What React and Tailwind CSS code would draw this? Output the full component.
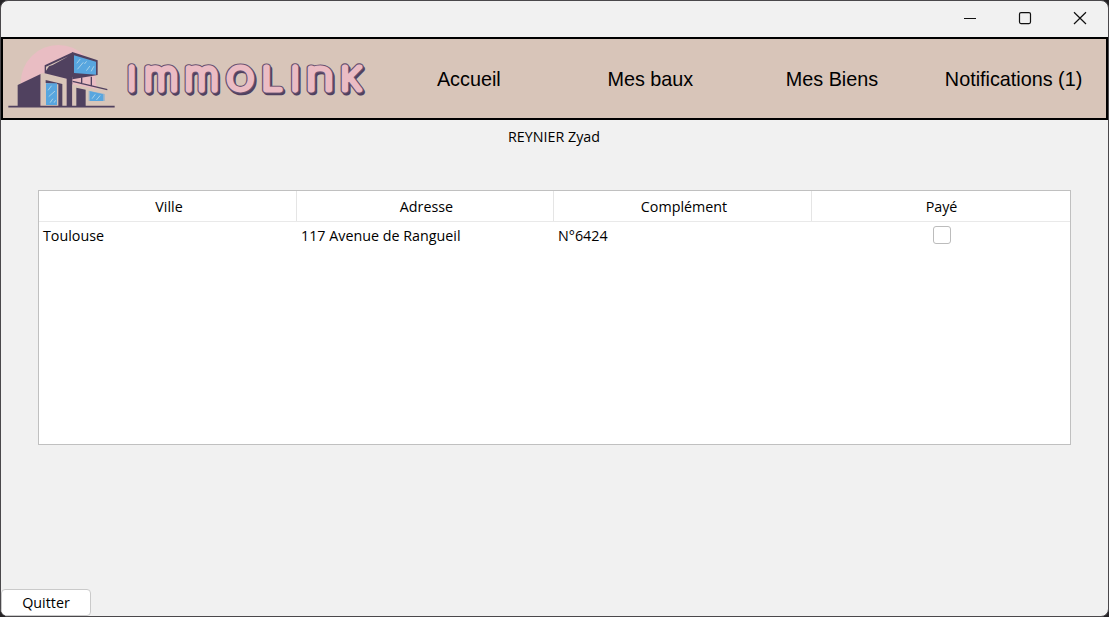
import React from "react";

const letters = [
  { c: "I", x: 127.7, sx: 1, size: 31 },
  { c: "m", x: 144.1, sx: 0.98, size: 40.5 },
  { c: "m", x: 184.6, sx: 0.98, size: 40.5 },
  { c: "O", x: 226.8, sx: 1.17, size: 31 },
  { c: "L", x: 262, sx: 1.15, size: 31 },
  { c: "I", x: 291.3, sx: 1, size: 31 },
  { c: "n", x: 305.9, sx: 1.18, size: 40.5 },
  { c: "K", x: 340.8, sx: 1.08, size: 31 },
];

function Wordmark() {
  return (
    <svg viewBox="120 39 255 79" className="h-[79px] w-[255px] shrink-0" role="img" aria-label="Immolink">
      <defs>
        <g id="wordmark" fontFamily="Inter, sans-serif" fontWeight="100">
          {letters.map((l, i) => (
            <text
              key={i}
              transform={`translate(${l.x} 90) scale(${l.sx} 1)`}
              fontSize={l.size}
              vectorEffect="non-scaling-stroke"
            >
              {l.c}
            </text>
          ))}
        </g>
      </defs>
      <g strokeLinejoin="round" strokeLinecap="round">
        <use href="#wordmark" x="1.5" y="1.5" fill="#50415f" stroke="#50415f" strokeWidth="7.2" />
        <use href="#wordmark" fill="#50415f" stroke="#665270" strokeWidth="7.6" />
        <use href="#wordmark" fill="#ebbcc4" stroke="#ebbcc4" strokeWidth="5.3" />
      </g>
    </svg>
  );
}

function House() {
  return (
    <svg viewBox="9 9 351 237" className="h-[79px] w-[117px] shrink-0" aria-hidden="true">
      <path d="M62 140A113 114 0 0 1 175 27A113 114 0 0 1 288 140L290 150V210H62Z" fill="#e9bdc3" />
      <path d="M53 147L122 114V210H53Z" fill="#50415f" />
      <path d="M122 112L136 112L200 128V210H122Z" fill="#d8c5b9" />
      <path d="M137 132L187 144V210H175V145L137 141Z" fill="#50415f" />
      <path d="M138 142H171V207H138Z" fill="#58a6df" />
      <path d="M134 88L219 48V122L200 128L134 112Z" fill="#50415f" />
      <path d="M138 104V92L206 61L158 87L147 91Z" fill="#d8c5b9" />
      <path d="M217 48L293 73V117L217 130Z" fill="#50415f" />
      <path d="M222 58L288 77V116L222 111Z" fill="#58a6df" />
      <path d="M200 120H217V210H200Z" fill="#50415f" />
      <path d="M217 145L310 163V210H217Z" fill="#d8c5b9" />
      <path d="M218 136L322 161M245 124V142M274 122V148" stroke="#50415f" strokeWidth="4" fill="none" />
      <path d="M229 155L257 161V210H229Z" fill="#50415f" />
      <path d="M266 164L314 174V195H266Z" fill="#8fb3cf" />
      <path d="M270 166L309 175V195H270Z" fill="#58a6df" />
      <path
        d="M145 162L154 150M147 181L164 166M151 199L158 189M163 199L166 194M231 81L240 70M233 99L249 80M254 83L259 77M260 103L269 91M274 105L281 92M277 187L285 176M290 191L300 179"
        stroke="#a9d2e9"
        strokeWidth="3"
        strokeLinecap="round"
      />
      <path d="M25 212H344" stroke="#50415f" strokeWidth="5" />
    </svg>
  );
}

function TitleBar() {
  return (
    <div className="flex h-9 shrink-0 justify-end">
      <svg viewBox="943 1 165 36" className="h-9 w-[165px]" fill="none" stroke="#111" strokeWidth="1.2">
        <path d="M964 18.5H976" />
        <rect x="1019.5" y="12.6" width="11" height="11" rx="1.5" />
        <path d="M1074 12.3L1086 24M1086 12.3L1074 24" />
      </svg>
    </div>
  );
}

const nav = ["Accueil", "Mes baux", "Mes Biens", "Notifications (1)"];
const columns = ["Ville", "Adresse", "Complément", "Payé"];

export default function App() {
  return (
    <div className="h-[617px] w-[1109px] bg-[#252326] font-['Open_Sans','Noto_Sans',sans-serif] text-[14.3px] text-black">
      <div className="flex h-full flex-col overflow-hidden rounded-lg border border-[#4a484b] bg-[#f1f1f1]">
        <TitleBar />
        <header className="grid h-[83px] shrink-0 grid-cols-[375px_repeat(4,181.6px)] items-center border-2 border-black bg-[#d8c5b9] font-['Liberation_Sans',sans-serif] text-[19.8px]">
          <div className="flex">
            <House />
            <Wordmark />
          </div>
          {nav.map((n) => (
            <a key={n} className="whitespace-nowrap pt-[2px] text-center">{n}</a>
          ))}
        </header>
        <p className="mt-[6px] pr-px text-center leading-[22px]">REYNIER Zyad</p>
        <main className="mx-[37px] mt-[42px] h-[255px] w-[1033px] shrink-0 border border-[#c0c0c0] bg-white">
          <div className="grid h-[31px] grid-cols-[258px_257px_258px_1fr] border-b border-[#e9e9e9]">
            {columns.map((c) => (
              <div key={c} className="flex items-center justify-center border-r border-[#e5e5e5] pt-px pl-[3px] last:border-r-0 last:pl-px">
                {c}
              </div>
            ))}
          </div>
          <div className="grid h-[27px] grid-cols-[258px_257px_258px_1fr] items-center">
            <span className="pl-1">Toulouse</span>
            <span className="pl-1">117 Avenue de Rangueil</span>
            <span className="pl-1">N°6424</span>
            <span className="flex justify-center pr-px pb-px pl-[2px]">
              <span className="size-[18px] rounded-[3px] border-[1.5px] border-[#bcbcbc] bg-white" />
            </span>
          </div>
        </main>
        <button className="mt-auto h-[27px] w-[90px] shrink-0 rounded border border-[#cacaca] bg-white">
          Quitter
        </button>
      </div>
    </div>
  );
}
